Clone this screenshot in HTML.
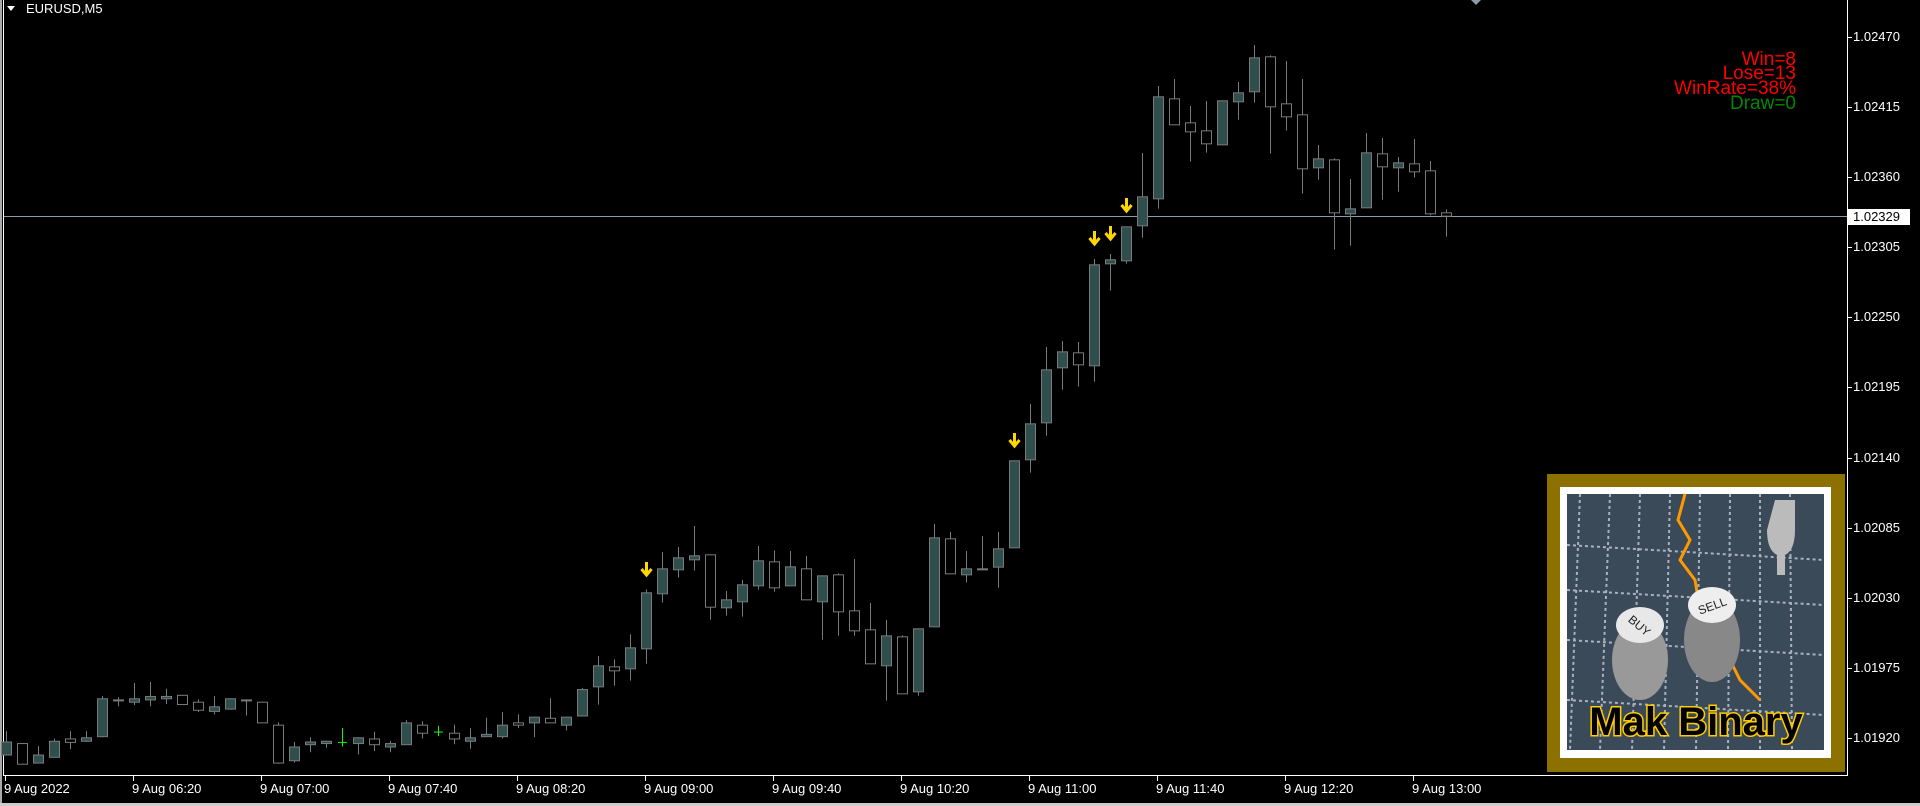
<!DOCTYPE html>
<html><head><meta charset="utf-8">
<style>
html,body{margin:0;padding:0;background:#000;width:1920px;height:806px;overflow:hidden;font-family:"Liberation Sans",sans-serif}
#c{position:absolute;left:0;top:0}
.t{position:absolute;color:#fff;font-size:13px;white-space:nowrap}
.st{position:absolute;right:124px;text-align:right;font-size:19px;line-height:15px;white-space:nowrap}
</style></head><body>
<svg id="c" width="1920" height="806" xmlns="http://www.w3.org/2000/svg">
<rect x="0" y="0" width="2" height="806" fill="#aaa"/>
<line x1="3.5" y1="0" x2="3.5" y2="776" stroke="#fff"/>
<line x1="3" y1="775.5" x2="1848" y2="775.5" stroke="#fff"/>
<line x1="1847.5" y1="0" x2="1847.5" y2="776" stroke="#fff"/>
<rect x="0" y="803" width="1920" height="3" fill="#ccc"/>
<line x1="4" y1="216.5" x2="1847" y2="216.5" stroke="#8a9aab"/>
<polygon points="1471,0 1481,0 1476,5" fill="#8a9aab"/>
<polygon points="7,6 15,6 11,11" fill="#fff"/>
<g id="candles"></g>
<g id="ticks" stroke="#fff"></g>
<rect x="1547" y="474" width="298" height="298" fill="#8c7000"/>
<rect x="1560" y="487" width="271" height="271" fill="#fff"/>
<rect x="1567" y="494" width="257" height="256" fill="#3a4a58"/>
<g stroke="#c8ccd8" stroke-width="2" stroke-dasharray="3,3" opacity="0.8">
<line x1="1580" y1="494" x2="1570" y2="750"/><line x1="1610" y1="494" x2="1600" y2="750"/><line x1="1640" y1="494" x2="1632" y2="750"/><line x1="1670" y1="494" x2="1664" y2="750"/><line x1="1700" y1="494" x2="1696" y2="750"/><line x1="1730" y1="494" x2="1728" y2="750"/><line x1="1760" y1="494" x2="1760" y2="750"/><line x1="1790" y1="494" x2="1792" y2="750"/>
<line x1="1567" y1="545" x2="1824" y2="560"/><line x1="1567" y1="590" x2="1824" y2="605"/><line x1="1567" y1="640" x2="1824" y2="655"/><line x1="1567" y1="700" x2="1824" y2="715"/>
</g>
<polyline points="1685,494 1678,520 1690,540 1680,560 1695,580 1700,610 1720,640 1740,680 1760,700" fill="none" stroke="#f90" stroke-width="3"/>
<path d="M1775,500 h20 v30 q0,20 -10,25 v20 h-8 v-20 q-10,-5 -10,-25z" fill="#bbb"/>
<ellipse cx="1640" cy="660" rx="28" ry="40" fill="#999"/>
<ellipse cx="1640" cy="625" rx="24" ry="18" fill="#e8e8e8"/>
<ellipse cx="1712" cy="640" rx="28" ry="42" fill="#888"/>
<ellipse cx="1712" cy="605" rx="24" ry="18" fill="#eee"/>
<text x="1640" y="630" font-size="12" text-anchor="middle" fill="#222" font-family="Liberation Sans,sans-serif" transform="rotate(40 1640 625)">BUY</text>
<text x="1712" y="610" font-size="12" text-anchor="middle" fill="#222" font-family="Liberation Sans,sans-serif" transform="rotate(-20 1712 605)">SELL</text>
<text x="1696" y="735" font-size="40" text-anchor="middle" fill="#000" stroke="#ffcc00" stroke-width="3" paint-order="stroke" font-family="Liberation Sans,sans-serif" font-weight="bold">Mak Binary</text>
<rect x="1848" y="209" width="62" height="16" fill="#fff"/>
</svg>
<div class="t" style="left:26px;top:1px;color:#fff">EURUSD,M5</div>
<div class="st" style="top:52px;color:#f00">Win=8</div>
<div class="st" style="top:66px;color:#f00">Lose=13</div>
<div class="st" style="top:81px;color:#f00">WinRate=38%</div>
<div class="st" style="top:96px;color:#080">Draw=0</div>
<div id="lab"></div>
<script>
var NS="http://www.w3.org/2000/svg";
var g=document.getElementById('candles');
function el(n,a){var e=document.createElementNS(NS,n);for(var k in a)e.setAttribute(k,a[k]);g.appendChild(e);}
function add(i,bt,bb,wt,wb,t){
 var x=6+16*i;
 el('line',{x1:x+0.5,y1:wt,x2:x+0.5,y2:wb,stroke:'#7a7a7a'});
 if(t=='g'){el('line',{x1:x-4,y1:bt+0.5,x2:x+5,y2:bt+0.5,stroke:'#0f0'});el('line',{x1:x+0.5,y1:wt,x2:x+0.5,y2:wb,stroke:'#0f0'});return;}
 var h=Math.max(bb-bt,1);
 el('rect',{x:x-4.5,y:bt+0.5,width:10,height:h,fill:t=='f'?'#2f4f4f':'#000',stroke:'#7a7a7a'});
}
function seg(d,oy,k,start){d.forEach(function(c,j){var i=start+j;
 if(c[4]=='g'){add(i,oy+c[0]/k,0,oy+c[2]/k,oy+c[3]/k,'g');}
 else add(i,oy+c[0]/k,oy+c[1]/k,oy+Math.min(c[2],c[0])/k,oy+Math.max(c[3],c[1])/k,c[4]);});}
var k3=2.613;
seg([[213,247,186,247,'f'],[217,271,217,271,'h'],[247,268,225,268,'f'],[211,253,205,253,'f'],[205,214,186,233,'h'],[202,211,186,214,'f'],[100,199,94,202,'f'],[103,105,97,121,'h'],[100,109,60,118,'f'],[94,103,57,121,'f'],[94,100,75,115,'f'],[91,115,91,115,'h'],[109,130,103,136,'h'],[121,133,94,142,'f'],[100,127,100,130,'f'],[103,105,103,145,'h'],[109,163,109,163,'h'],[169,268,163,271,'h'],[226,262,214,268,'f'],[213,220,202,241,'f'],[211,217,211,229,'f'],[214,0,178,226,'g'],[202,217,202,247,'f'],[205,220,187,238,'h'],[217,226,211,241,'f'],[163,220,157,220,'f'],[169,190,160,205,'h'],[187,0,172,199,'g'],[190,205,169,220,'h'],[202,211,178,232,'f'],[193,199,151,199,'f'],[169,199,136,205,'f'],[163,169,142,178,'h'],[148,163,148,202,'f'],[151,163,100,163,'h'],[148,169,148,184,'f'],[76,145,73,145,'f']],660,k3,0);
seg([[466,529,438,584,'f'],[469,481,448,527,'h'],[412,475,373,512,'f'],[247,415,238,461,'f'],[175,250,126,278,'f'],[142,178,111,203,'f'],[136,148,48,182,'f'],[133,290,133,329,'h'],[268,292,243,317,'f'],[223,274,210,320,'f'],[151,226,108,239,'f'],[154,232,121,245,'h'],[169,226,123,226,'f'],[175,268,138,268,'h'],[196,274,196,389,'f'],[193,304,190,377,'h'],[301,361,147,377,'h'],[358,460,279,460,'h'],[376,466,330,572,'f'],[379,550,376,550,'h'],[355,544,355,557,'f'],[82,349,42,349,'f'],[85,190,66,193,'h'],[175,193,123,217,'f'],[175,177,78,178,'h']],510,3,37);
seg([[1075,1130,1026,1193,'f'],[811,1072,811,1072,'f'],[700,808,642,848,'f'],[538,697,471,737,'f'],[484,532,453,599,'f'],[487,523,456,590,'h'],[223,526,207,575,'f'],[208,220,192,302,'f'],[109,211,109,221,'f']],190,3,62);
seg([[469,556,339,593,'f'],[169,475,138,506,'f'],[175,253,117,253,'h'],[247,274,198,365,'h'],[271,310,183,338,'h'],[181,313,181,316,'f'],[157,184,126,239,'f'],[52,154,15,188,'f'],[49,199,46,341,'h'],[190,229,63,272,'h'],[223,385,117,461,'h'],[355,382,315,419,'f'],[358,517,355,629,'h'],[505,520,417,617,'f'],[337,502,279,502,'f'],[340,379,294,479,'h'],[367,382,351,455,'f'],[370,394,297,413,'h'],[391,520,363,526,'h'],[517,527,508,590,'h']],40,3,71);
[[40,569],[63,440],[68,238],[69,233],[70,205]].forEach(function(a){var x=6+16*a[0]+0.5,y=a[1];
 el('path',{d:'M'+x+','+(y-7)+' V'+(y+5)+' M'+(x-5)+','+(y)+' L'+x+','+(y+6)+' L'+(x+5)+','+y,stroke:'#ffd700',"stroke-width":3,fill:'none'});});
var tk=document.getElementById('ticks'),lab=document.getElementById('lab'),h='';
var P=[['1.02470',37],['1.02415',107],['1.02360',177],['1.02305',247],['1.02250',317],['1.02195',387],['1.02140',458],['1.02085',528],['1.02030',598],['1.01975',668],['1.01920',738]];
P.forEach(function(p){var l=document.createElementNS(NS,'line');l.setAttribute('x1',1848);l.setAttribute('x2',1852);l.setAttribute('y1',p[1]+0.5);l.setAttribute('y2',p[1]+0.5);tk.appendChild(l);
 h+='<div class="t" style="left:1853px;top:'+(p[1]-8)+'px">'+p[0]+'</div>';});
h+='<div class="t" style="left:1853px;top:209px;color:#000">1.02329</div>';
var T=['9 Aug 2022','9 Aug 06:20','9 Aug 07:00','9 Aug 07:40','9 Aug 08:20','9 Aug 09:00','9 Aug 09:40','9 Aug 10:20','9 Aug 11:00','9 Aug 11:40','9 Aug 12:20','9 Aug 13:00'];
T.forEach(function(t,i){var x=5+128*i;var l=document.createElementNS(NS,'line');l.setAttribute('x1',x+0.5);l.setAttribute('x2',x+0.5);l.setAttribute('y1',776);l.setAttribute('y2',781);tk.appendChild(l);
 h+='<div class="t" style="left:'+(x-1)+'px;top:781px">'+t+'</div>';});
lab.innerHTML=h;
</script>
</body></html>
